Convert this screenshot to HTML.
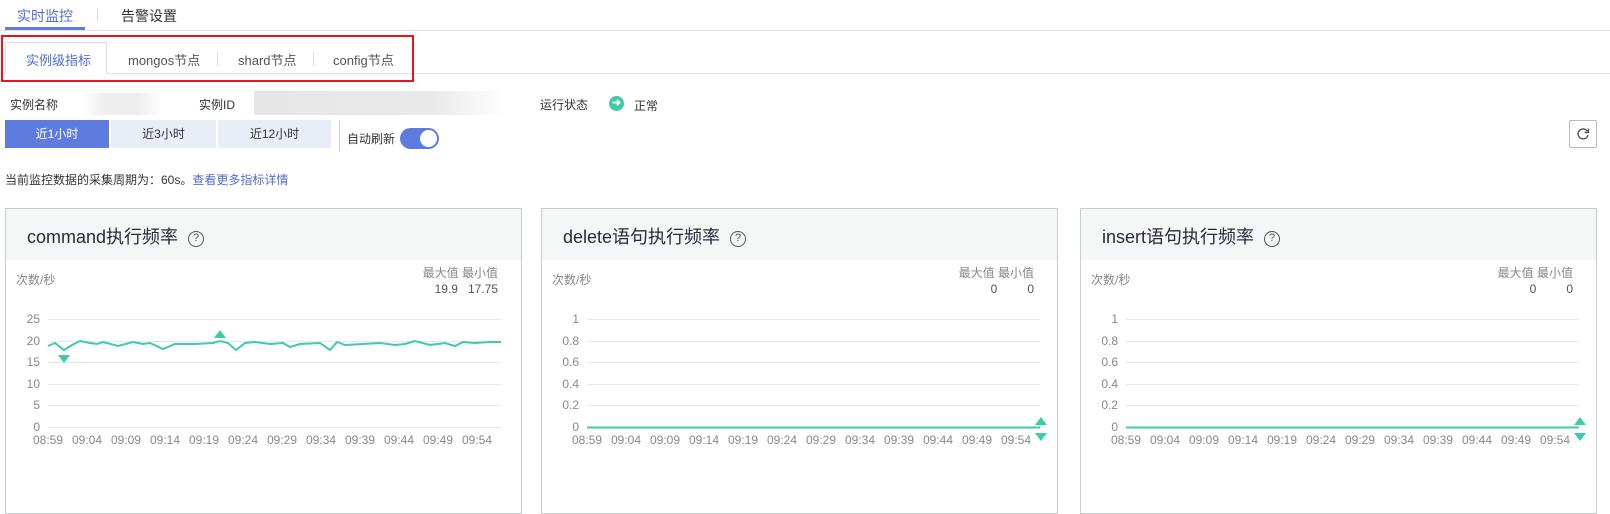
<!DOCTYPE html>
<html><head><meta charset="utf-8"><style>
*{margin:0;padding:0;box-sizing:border-box}
body{width:1610px;height:512px;background:#fff;font-family:"Liberation Sans","Noto Sans CJK SC",sans-serif;color:#333;position:relative;overflow:hidden;font-size:12px}
.a{position:absolute;white-space:nowrap}
.card{position:absolute;top:208px;width:517px;height:306px;border:1px solid #c8cbd0;background:#fff}
.hd{position:absolute;left:0;top:0;right:0;height:51px;background:#f5f7f7}
.tt{position:absolute;left:21px;top:14px;font-size:18px;color:#252b3a}
.q{display:inline-block;width:16px;height:16px;border:1.5px solid #555;border-radius:50%;font-size:11px;line-height:13px;text-align:center;vertical-align:2px;margin-left:10px;color:#555}
.g{color:#888}
.st{font-size:13px;color:#555;top:50px}
</style></head><body>
<div class="a" style="left:17px;top:6px;font-size:14px;color:#526ecc">实时监控</div>
<div class="a" style="left:97px;top:8px;width:1px;height:14px;background:#ddd"></div>
<div class="a" style="left:121px;top:6px;font-size:14px;color:#333">告警设置</div>
<div class="a" style="left:0;top:30px;width:1610px;height:1px;background:#dfe1e6"></div>
<div class="a" style="left:5px;top:27px;width:80px;height:3px;background:#5e7ce0"></div>

<div class="a" style="left:0;top:73px;width:1610px;height:1px;background:#dfe1e6"></div>
<div class="a" style="left:5px;top:42px;width:102px;height:32px;border:1px solid #dfe1e6;border-bottom:none;background:#fff"></div>
<div class="a st" style="left:26px;color:#526ecc">实例级指标</div>
<div class="a st" style="left:128px">mongos节点</div>
<div class="a" style="left:217px;top:52px;width:1px;height:14px;background:#ddd"></div>
<div class="a st" style="left:238px">shard节点</div>
<div class="a" style="left:313px;top:52px;width:1px;height:14px;background:#ddd"></div>
<div class="a st" style="left:333px">config节点</div>
<div class="a" style="left:1px;top:35px;width:413px;height:47px;border:2px solid #e8141b"></div>

<div class="a" style="left:10px;top:96px">实例名称</div>
<div class="a" style="left:82px;top:93px;width:80px;height:22px;background:linear-gradient(90deg,#fff,#eee 30%,#eee 70%,#fff)"></div>
<div class="a" style="left:199px;top:96px">实例ID</div>
<div class="a" style="left:254px;top:91px;width:252px;height:24px;background:linear-gradient(90deg,#e6e6e6,#e9e9e9 70%,#fff)"></div>
<div class="a" style="left:540px;top:96px">运行状态</div>
<div class="a" style="left:609px;top:96px;width:15px;height:15px;border-radius:50%;background:#3dcca6;color:#fff;font-size:11px;line-height:15px;text-align:center;font-weight:bold">➜</div>
<div class="a" style="left:634px;top:97px">正常</div>

<div class="a" style="left:5px;top:120px;width:104px;height:28px;background:#5e7ce0;color:#fff;text-align:center;line-height:28px">近1小时</div>
<div class="a" style="left:111px;top:120px;width:105px;height:28px;background:#e8edf8;text-align:center;line-height:28px">近3小时</div>
<div class="a" style="left:218px;top:120px;width:113px;height:28px;background:#e8edf8;text-align:center;line-height:28px">近12小时</div>
<div class="a" style="left:339px;top:120px;width:1px;height:32px;background:#ccc"></div>
<div class="a" style="left:347px;top:130px">自动刷新</div>
<div class="a" style="left:400px;top:128px;width:39px;height:21px;border-radius:11px;background:#5e7ce0"></div>
<div class="a" style="left:420px;top:130px;width:17px;height:17px;border-radius:50%;background:#fff"></div>
<div class="a" style="left:1569px;top:120px;width:28px;height:28px;border:1px solid #bbb;border-radius:2px"></div>
<svg class="a" style="left:1575px;top:126px" width="16" height="16" viewBox="0 0 16 16"><path d="M12.5 5.5A5 5 0 1 0 13 9" fill="none" stroke="#555" stroke-width="1.4"/><path d="M13.5 2.5v4h-4" fill="none" stroke="#555" stroke-width="1.4"/></svg>
<div class="a" style="left:5px;top:171px">当前监控数据的采集周期为：60s。<span style="color:#526ecc">查看更多指标详情</span></div>

<div class="card" style="left:5px"><div class="hd"></div><div class="tt">command执行频率<span class="q">?</span></div>
<div class="a g" style="left:10px;top:62px">次数/秒</div>
<div class="a g" style="right:23px;top:55px">最大值 最小值</div>
<div class="a" style="right:23px;top:73px;color:#555">19.9 &nbsp; 17.75</div></div>
<div class="card" style="left:541px"><div class="hd"></div><div class="tt">delete语句执行频率<span class="q">?</span></div>
<div class="a g" style="left:10px;top:62px">次数/秒</div>
<div class="a g" style="right:23px;top:55px">最大值 最小值</div>
<div class="a" style="right:23px;top:73px;color:#555">0 &nbsp; &nbsp; &nbsp; &nbsp; 0</div></div>
<div class="card" style="left:1080px"><div class="hd"></div><div class="tt">insert语句执行频率<span class="q">?</span></div>
<div class="a g" style="left:10px;top:62px">次数/秒</div>
<div class="a g" style="right:23px;top:55px">最大值 最小值</div>
<div class="a" style="right:23px;top:73px;color:#555">0 &nbsp; &nbsp; &nbsp; &nbsp; 0</div></div>

<svg class="a" style="left:0;top:0" width="1610" height="512" font-family="Liberation Sans, sans-serif" font-size="12" fill="#888">
<g stroke="#e8e8e8" stroke-width="1">
<path d="M48 319.5H501M48 341.5H501M48 362.5H501M48 384.5H501M48 405.5H501M48 427.5H501"/>
<path d="M587 319.5H1040M587 341.5H1040M587 362.5H1040M587 384.5H1040M587 405.5H1040"/>
<path d="M1126 319.5H1579M1126 341.5H1579M1126 362.5H1579M1126 384.5H1579M1126 405.5H1579"/>
</g>
<g text-anchor="end">
<text x="40" y="323">25</text><text x="40" y="345">20</text><text x="40" y="366">15</text><text x="40" y="388">10</text><text x="40" y="409">5</text><text x="40" y="431">0</text>
<text x="579" y="323">1</text><text x="579" y="345">0.8</text><text x="579" y="366">0.6</text><text x="579" y="388">0.4</text><text x="579" y="409">0.2</text><text x="579" y="431">0</text>
<text x="1118" y="323">1</text><text x="1118" y="345">0.8</text><text x="1118" y="366">0.6</text><text x="1118" y="388">0.4</text><text x="1118" y="409">0.2</text><text x="1118" y="431">0</text>
</g>
<g text-anchor="middle">
<text x="48" y="444">08:59</text><text x="87" y="444">09:04</text><text x="126" y="444">09:09</text><text x="165" y="444">09:14</text><text x="204" y="444">09:19</text><text x="243" y="444">09:24</text><text x="282" y="444">09:29</text><text x="321" y="444">09:34</text><text x="360" y="444">09:39</text><text x="399" y="444">09:44</text><text x="438" y="444">09:49</text><text x="477" y="444">09:54</text>
<text x="587" y="444">08:59</text><text x="626" y="444">09:04</text><text x="665" y="444">09:09</text><text x="704" y="444">09:14</text><text x="743" y="444">09:19</text><text x="782" y="444">09:24</text><text x="821" y="444">09:29</text><text x="860" y="444">09:34</text><text x="899" y="444">09:39</text><text x="938" y="444">09:44</text><text x="977" y="444">09:49</text><text x="1016" y="444">09:54</text>
<text x="1126" y="444">08:59</text><text x="1165" y="444">09:04</text><text x="1204" y="444">09:09</text><text x="1243" y="444">09:14</text><text x="1282" y="444">09:19</text><text x="1321" y="444">09:24</text><text x="1360" y="444">09:29</text><text x="1399" y="444">09:34</text><text x="1438" y="444">09:39</text><text x="1477" y="444">09:44</text><text x="1516" y="444">09:49</text><text x="1555" y="444">09:54</text>
</g>
<polyline fill="none" stroke="#3dcca6" stroke-width="2" points="48,346 55,343 64,350 72,345 80,341 90,343 97,344 103,342 118,346 133,342 143,344 150,343 163,349 175,344 195,344 213,343 220,341 228,343 236,350 245,343 255,342 270,344 283,343 290,347 300,344 320,343 330,350 337,342 345,345 380,343 395,345 405,344 415,341 430,345 445,343 455,346 463,342 475,343 490,342 501,342"/>
<path d="M214 338l6-8 6 8zM58 355h12l-6 8z" fill="#3dcca6"/>
<path d="M587 427.5H1040M1126 427.5H1579" stroke="#3dcca6" stroke-width="2"/>
<path d="M1035 425l6-8 6 8zM1035 433h12l-6 8zM1574 425l6-8 6 8zM1574 433h12l-6 8z" fill="#3dcca6"/>
</svg>
</body></html>
